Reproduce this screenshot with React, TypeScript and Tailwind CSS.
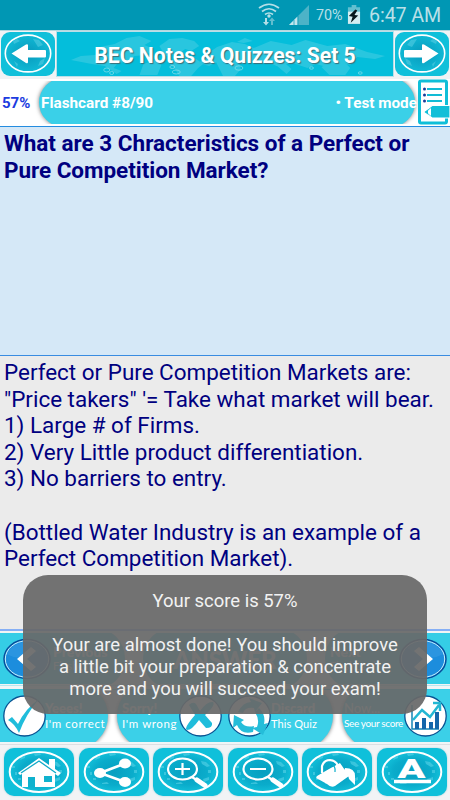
import React from "react";

function Specks() {
  return (
    <g fill="#5fd6ea" opacity=".55">
      <path d="M8 18h3v2h-3zM11 24h2v3h-2zM17 9l4-1v2l-5 2zM23 35l5-1 2 2h-7zM48 13l5 1 4 4-3 1-5-3zM55 22h3v3h-3zM50 31l6-2v3l-5 2zM30 6l6-1 1 2-6 1zM14 30h3v2h-3z" />
    </g>
  );
}

function Tile({ children, id }: { children: React.ReactNode; id: string }) {
  return (
    <div className="h-[48px] w-[70px] overflow-hidden rounded-[10px] bg-[#0fc0da] shadow-[0_0_2px_#9ccfd8]">
      <svg viewBox="0 0 70 48" className="block h-full w-full" preserveAspectRatio="none">
        <defs>
          <radialGradient id={id}>
            <stop offset="0" stopColor="#069fc0" />
            <stop offset=".65" stopColor="#0aaccb" />
            <stop offset="1" stopColor="#12bfd9" />
          </radialGradient>
        </defs>
        <ellipse cx="35" cy="24" rx="29" ry="20" fill={`url(#${id})`} />
        <Specks />
        <ellipse cx="35" cy="24" rx="29.3" ry="20" fill="none" stroke="#fff" strokeWidth="2" />
        {children}
      </svg>
    </div>
  );
}

function ArrowTile({ flip, id }: { flip?: boolean; id: string }) {
  return (
    <div className="h-[44px] w-[54px] shrink-0 overflow-hidden rounded-[9px] bg-[#10c0da]">
      <svg viewBox="0 0 54 44" className={flip ? "block h-full w-full -scale-x-100" : "block h-full w-full"}>
        <defs>
          <radialGradient id={id}>
            <stop offset="0" stopColor="#0899bc" />
            <stop offset="1" stopColor="#10b9d5" />
          </radialGradient>
        </defs>
        <ellipse cx="27" cy="21.5" rx="22.7" ry="18.4" fill={`url(#${id})`} stroke="#fff" strokeWidth="1.6" />
        <path d="M12 9l4-2 3 2-6 3zM32 7l6 1 4 5-5 2zM39 29l5-3-2 6-5 2zM13 29l4 3-1 3z" fill="#53cce1" opacity=".6" />
        <path d="M10.500 21.500L25 12.500q2-1 2 1V18h17q1 0 1 1v5.500q0 1-1 1H27v4.500q0 2-2 1z" fill="#fff" />
      </svg>
    </div>
  );
}

function WorldMap() {
  return (
    <svg viewBox="0 0 338 44" className="absolute inset-0 h-full w-full" preserveAspectRatio="none">
      <g fill="#48cee3" opacity=".55">
        <path d="M14 28l10-4 14-1 9-3-4-5 15-3 12-6 13-2 12 5-7 4 9 4-7 6-12 1-8 6-9 1-4 5 8 3-5 3-12-8-13-2z" />
        <path d="M83 43l4-11 12-4 6 5-4 10zM103 14l10-7 13-1 12 3 5 5-8 5-6-2-7 5-13 2zM111 30l15-5 14 2 7 5-5 4-7 8h-12l-5-8z" />
        <path d="M151 22l10-7 15-5 13 2 9 4 17-7 21 4 14-5 22 6 18-2 22 8 18 4-10 3-18-2-7 8-12-2-11 4-12-3-8 4-15-5-16 3-12-5-17 1-14 4-17-4-8 4-10-3z" />
        <path d="M160 30l14-2 9 4 2 5-6 7h-12zM266 35l11-6 12 1 6 6-5 7h-16zM219 32l10-1 7 6-5 5zM181 10l8-4 8 3-9 2z" />
      </g>
      <g fill="none" stroke="#81dce9" opacity=".8">
        <ellipse cx="50" cy="38" rx="3" ry="2" /><ellipse cx="55" cy="41" rx="2" ry="1.5" />
        <ellipse cx="116" cy="35" rx="2.5" ry="1.5" /><ellipse cx="120" cy="40" rx="4" ry="2" />
        <ellipse cx="183" cy="36" rx="4" ry="2.2" /><ellipse cx="256" cy="36" rx="2" ry="1.2" /><ellipse cx="305" cy="41" rx="2" ry="1.2" />
      </g>
    </svg>
  );
}

function StatusBar() {
  return (
    <div className="flex h-[30px] items-center bg-[#0097b4] pl-[258px] text-[#b9e0e8]">
      <svg width="60" height="30" viewBox="0 0 60 30" className="shrink-0">
        <g fill="none" stroke="#b5dfe7" strokeWidth="1.7">
          <path d="M1 8Q11 .5 21 8M4 11.5Q11 6 18 11.5M7 14.5Q11 11.5 15 14.5" />
        </g>
        <circle cx="11" cy="16" r="1.7" fill="#b5dfe7" />
        <path d="M7 18v4H5l3 3.500 3-3.500H9v-4z" fill="#b5dfe7" />
        <path d="M13 25v-4h-2l3-3.500 3 3.500h-2v4z" fill="#62bdce" />
        <path d="M31 25L51 5v20z" fill="#4db3c7" />
        <path d="M31 25l8.500-8.500V25z" fill="#c3e6ed" />
        <path d="M36 20v5M40 16v9" stroke="#0097b4" strokeWidth=".7" />
      </svg>
      <span className="-ml-[2px] w-[31px] whitespace-nowrap text-[14.3px] leading-[30px]">70%</span>
      <svg width="14" height="20" viewBox="0 0 15 18" preserveAspectRatio="none" className="shrink-0">
        <path d="M5 0h5v2h4v5H1V2h4z" fill="#62bfd0" />
        <path d="M1 6h13v11H1z" fill="#d5edf1" />
        <path d="M9 4L2 10l4 .5L4 16l8-6.500-4-.5 3-4z" fill="#07171c" />
      </svg>
      <span className="ml-[8px] whitespace-nowrap pt-px text-[19.7px] leading-[30px] tracking-[-0.1px]">6:47 AM</span>
    </div>
  );
}

function NavCircle({ flip }: { flip?: boolean }) {
  return (
    <svg width="48" height="42" viewBox="0 0 48 42" className={flip ? "shrink-0 -scale-x-100" : "shrink-0"}>
      <ellipse cx="24" cy="21" rx="23" ry="19.500" fill="#1c8ddd" stroke="#064e9b" strokeWidth="1.500" />
      <ellipse cx="24" cy="21" rx="21.700" ry="18.200" fill="none" stroke="#c8eefb" strokeWidth="1" />
      <path d="M4 16Q22 26 40 10Q32 2 20 4Q8 7 4 16z" fill="#4eaae8" opacity=".3" />
      <path d="M28 9l5 4-9 8 9 8-5 4-14-12z" fill="#fff" />
    </svg>
  );
}

function RoundIcon({ children }: { children: React.ReactNode }) {
  return (
    <svg width="43" height="42" viewBox="0 0 43 42" className="shrink-0">
      <ellipse cx="21.500" cy="21" rx="20.700" ry="20" fill="#fff" stroke="#075292" strokeWidth="1.300" />
      {children}
    </svg>
  );
}

function ResultLabel({ top, bottom, className, bottomClass, light }: { top: string; bottom: string; className: string; bottomClass: string; light?: boolean }) {
  return (
    <span className={`flex flex-col whitespace-nowrap font-['Lato'] text-white ${className}`}>
      <span className={light ? "text-[13px] leading-[15px]" : "text-[13px] font-black leading-[15px]"}>{top}</span>
      <span className={`leading-[15px] ${bottomClass}`}>{bottom}</span>
    </span>
  );
}

export default function App() {
  return (
    <div className="relative flex h-[800px] w-[450px] flex-col overflow-hidden bg-[#f1f3f5] font-['Roboto','Liberation_Sans',sans-serif]">
      <StatusBar />
      <header className="flex h-[49px] items-start gap-px border-t border-[#b3d8df] bg-[#f0f3f5] px-px pt-px">
        <ArrowTile id="back" />
        <div className="relative -mt-px flex h-[46px] w-[338px] items-center justify-center border border-[#b9dfe8] bg-[#04bedb]">
          <WorldMap />
          <h1 className="relative whitespace-nowrap pt-[3px] text-[21.2px] font-bold leading-[46px] text-white [text-shadow:1px_1px_1px_#386d78]">BEC Notes &amp; Quizzes: Set 5</h1>
        </div>
        <ArrowTile flip id="forward" />
      </header>

      <div className="relative flex h-[47px] items-center bg-white">
        <span className="w-[39px] shrink-0 pl-[2px] pt-px text-[15px] font-bold text-[#1c3ce0]">57%</span>
        <div className="relative isolate mb-[2px] mt-[1px] flex h-[43px] w-[376px] items-center justify-between overflow-y-clip whitespace-nowrap pl-[2px] text-[15.3px] font-bold text-white before:absolute before:inset-x-0 before:-inset-y-[3px] before:-z-10 before:rounded-[24.5px] before:bg-[#3ad0e8] before:shadow-[0_0_4px_#777]">
          <span className="pt-[2px]">Flashcard #8/90</span><span className="-mr-[2px] pt-[2px]">• Test mode</span>
        </div>
        <svg className="absolute right-0 top-0" width="33" height="46" viewBox="0 0 33 46">
          <rect x="2.500" y="2" width="27" height="42" rx="1.500" fill="#fff" stroke="#10bfd8" strokeWidth="3" />
          <path d="M10 10h15M10 16h15M10 22h15" stroke="#12bbd5" strokeWidth="1.800" />
          <g fill="#173b9a"><circle cx="7.500" cy="10" r="1.500" /><circle cx="7.500" cy="16" r="1.500" /><circle cx="7.500" cy="22" r="1.500" /></g>
          <path d="M7 33l8-6.500h18v12.500H15z" fill="#12bfd8" stroke="#fff" strokeWidth="1.200" />
          <path d="M9.500 33l4.500-4v8z" fill="#fff" /><path d="M7.500 33l3.500-2.500v5z" fill="#12bfd8" />
        </svg>
      </div>

      <main className="flex h-[503px] flex-col text-[#000080]">
        <section className="h-[229px] border-t border-[#248ce0] bg-[#d5e8f7] pl-[4px] pt-[3px] text-[22.5px] font-bold leading-[26.6px]">
          <p className="whitespace-nowrap">What are 3 Chracteristics of a Perfect or<br /><span className="tracking-[-0.04px]">Pure Competition Market?</span></p>
        </section>
        <section className="h-[274px] border-t border-[#398ce1] bg-[#ebebeb] pl-[4px] pt-[3px] text-[22.45px] leading-[26.6px]">
          <p className="whitespace-nowrap">Perfect or Pure Competition Markets are:<br />"Price takers" '= Take what market will bear.<br />1) Large # of Firms.<br />2) Very Little product differentiation.<br />3) No barriers to entry.<br /><br />(Bottled Water Industry is an example of a<br />Perfect Competition Market).</p>
        </section>
      </main>

      <div className="flex h-[56px] items-start justify-between border-t-2 border-[#85aff5] bg-[#f1f4f5] pt-[2px] font-['Lato'] font-black text-white">
        <div className="relative isolate flex h-[51px] w-[125px] items-center overflow-y-clip pl-[3px] before:absolute before:inset-x-0 before:-inset-y-[5px] before:-z-10 before:rounded-r-[30px] before:bg-[#35cde6]">
          <NavCircle /><span className="ml-[2px] text-[14px] leading-[13px]">Previous<br /><span className="text-[11px] font-normal">Flashcard</span></span>
        </div>
        <div className="relative isolate flex h-[51px] w-[164px] items-center justify-center overflow-y-clip pt-[3px] text-[24px] before:absolute before:inset-x-0 before:-inset-y-[5px] before:-z-10 before:rounded-[30px] before:bg-[#35cde6]">ANSWER</div>
        <div className="relative isolate flex h-[51px] w-[125px] items-center justify-between overflow-y-clip pl-[5px] pr-[3px] before:absolute before:inset-x-0 before:-inset-y-[5px] before:-z-10 before:rounded-l-[30px] before:bg-[#35cde6]">
          <span className="text-[14px] leading-[13px]">Next<br /><span className="text-[11px] font-normal">Flashcard</span></span><NavCircle flip />
        </div>
      </div>

      <div className="h-[59px] bg-[#f1f5f6]">
        <div className="h-px bg-[#b5e7ef]" />
        <div className="mt-[3px] flex h-[53px] items-center justify-between border-t border-[#35cde6] bg-white">
          <div className="relative isolate flex h-[52px] w-[108px] items-center overflow-y-clip pl-[3px] before:absolute before:inset-x-0 before:-inset-y-[7px] before:-z-10 before:rounded-r-[33px] before:bg-[#3bd0e8] before:shadow-[0_0_4px_#777]">
            <RoundIcon><path d="M5 25l4-3 6 7Q22 14 36 4Q23 19 16 38Q12 29 5 25z" fill="#20bddb" /></RoundIcon>
            <ResultLabel top="Yeees!" bottom="I'm correct" className="-ml-px" bottomClass="text-[11.500px] tracking-[0.6px]" />
          </div>
          <div className="relative isolate flex h-[52px] w-[216px] items-center overflow-y-clip pl-[5px] before:absolute before:inset-x-0 before:-inset-y-[7px] before:-z-10 before:rounded-[33px] before:bg-[#3bd0e8] before:shadow-[0_0_4px_#777]">
            <ResultLabel top="Sorry!" bottom="I'm wrong" className="w-[57px]" bottomClass="text-[11.500px] tracking-[0.6px]" />
            <RoundIcon><path d="M10 10q4-4 7-1l4 7q7-10 13-9 3 3-8 13l7 8q1 5-6 5l-7-8q-7 10-12 10-4-1 8-15z" fill="#20bddb" /></RoundIcon>
            <span className="w-[6px]" />
            <RoundIcon>
              <g fill="#25bdd9"><path d="M10 17Q15 7 23 7l-2-4 13 5-7 9-1-4Q17 12 15 18z" /><path d="M31 13q7 7 5 16l4-1-5 12-11-7 5-1q3-7-2-15z" /><path d="M25 37Q13 40 9 30l-4 3 1-13 10 5-3 2q4 6 13 4z" /></g>
            </RoundIcon>
            <ResultLabel top="Discard" bottom="This Quiz" className="" bottomClass="text-[11px] tracking-[0.1px]" />
          </div>
          <div className="relative isolate flex h-[52px] w-[108px] items-center justify-between overflow-y-clip pl-[2px] pr-[3px] before:absolute before:inset-x-0 before:-inset-y-[7px] before:-z-10 before:rounded-l-[33px] before:bg-[#3bd0e8] before:shadow-[0_0_4px_#777]">
            <ResultLabel top="Now..." bottom="See your score" className="w-[60px]" bottomClass="text-[10px] tracking-[-0.35px]" light />
            <RoundIcon>
              <path d="M8 10v24h27" stroke="#1585b6" strokeWidth="1.500" fill="none" />
              <path d="M11 34v-7h4v7zM18 34V23h4v11zM25 34v-7h4v7zM31 34V17h4v17z" fill="#1466aa" />
              <path d="M9 25l9-10 8 7 9-12M29 8h7v8" fill="none" stroke="#22b7d3" strokeWidth="2.500" />
            </RoundIcon>
          </div>
        </div>
      </div>

      <nav className="grid h-[56px] grid-cols-6 justify-items-center border-t border-[#dcdfe2] pl-[2px] pr-px pt-[3px]">
        <Tile id="home"><path d="M14 25l21-15 10 7v-6h6v10l6 4-3 3-3-2v13H18V26l-2 1z" fill="#fff" /><path d="M17 25l18-12 17 12" fill="none" stroke="#12abc8" strokeWidth="1.300" /><path d="M24 29h7v10h-7zM40 28h8v6h-8z" fill="#0fb2ce" /></Tile>
        <Tile id="share"><path d="M46 15.500L21 25l25 9" fill="none" stroke="#fff" strokeWidth="2.600" /><g fill="#fff"><ellipse cx="46" cy="15.500" rx="6" ry="5" /><ellipse cx="21" cy="25" rx="6" ry="5" /><ellipse cx="46" cy="34" rx="6" ry="5" /></g></Tile>
        <Tile id="zoom-in"><ellipse cx="29.500" cy="21" rx="14.500" ry="10.500" fill="none" stroke="#fff" strokeWidth="2.200" /><path d="M22 21h15M29.500 15v12M39 29l6 4" stroke="#fff" strokeWidth="2.200" /><path d="M44 32l8 5.500" stroke="#fff" strokeWidth="5" strokeLinecap="round" /></Tile>
        <Tile id="zoom-out"><ellipse cx="30" cy="21" rx="14.500" ry="10.500" fill="none" stroke="#fff" strokeWidth="2.200" /><path d="M22 21h16M40 29l6 4" stroke="#fff" strokeWidth="2.200" /><path d="M45 32l8 5.500" stroke="#fff" strokeWidth="5" strokeLinecap="round" /></Tile>
        <Tile id="fill"><path d="M15 28l12-7 11-6 9 13-14 10q-4 2-8-2l-9-5q-3-1-1-3z" fill="#fff" /><path d="M20 25v-7q2-6 8-6 8 1 8 8v3" fill="none" stroke="#fff" strokeWidth="2.200" /><path d="M27 20q0-3 2-4 5 2 4 8" fill="none" stroke="#0aaecb" strokeWidth="1.200" /><path d="M43 20q10 0 10 8v9l-6-6q-1-5-5-8z" fill="#fff" /></Tile>
        <Tile id="font"><text x="34.500" y="29.500" textAnchor="middle" fontFamily="Roboto" fontWeight="900" fontSize="26" textLength="28" lengthAdjust="spacingAndGlyphs" fill="#fff">A</text><path d="M17 33.500h37" stroke="#fff" strokeWidth="3.500" /></Tile>
      </nav>

      <div className="absolute left-[23px] top-[575px] h-[139px] w-[404px] rounded-[25px] bg-[rgba(104,104,104,0.93)] pt-[15px] text-center text-[18.45px] leading-[22.1px] text-[#f2f2f2]">
        <p className="whitespace-nowrap">Your score is 57%<br /><br />Your are almost done! You should improve<br />a little bit your preparation &amp; concentrate<br />more and you will succeed your exam!</p>
      </div>
    </div>
  );
}
